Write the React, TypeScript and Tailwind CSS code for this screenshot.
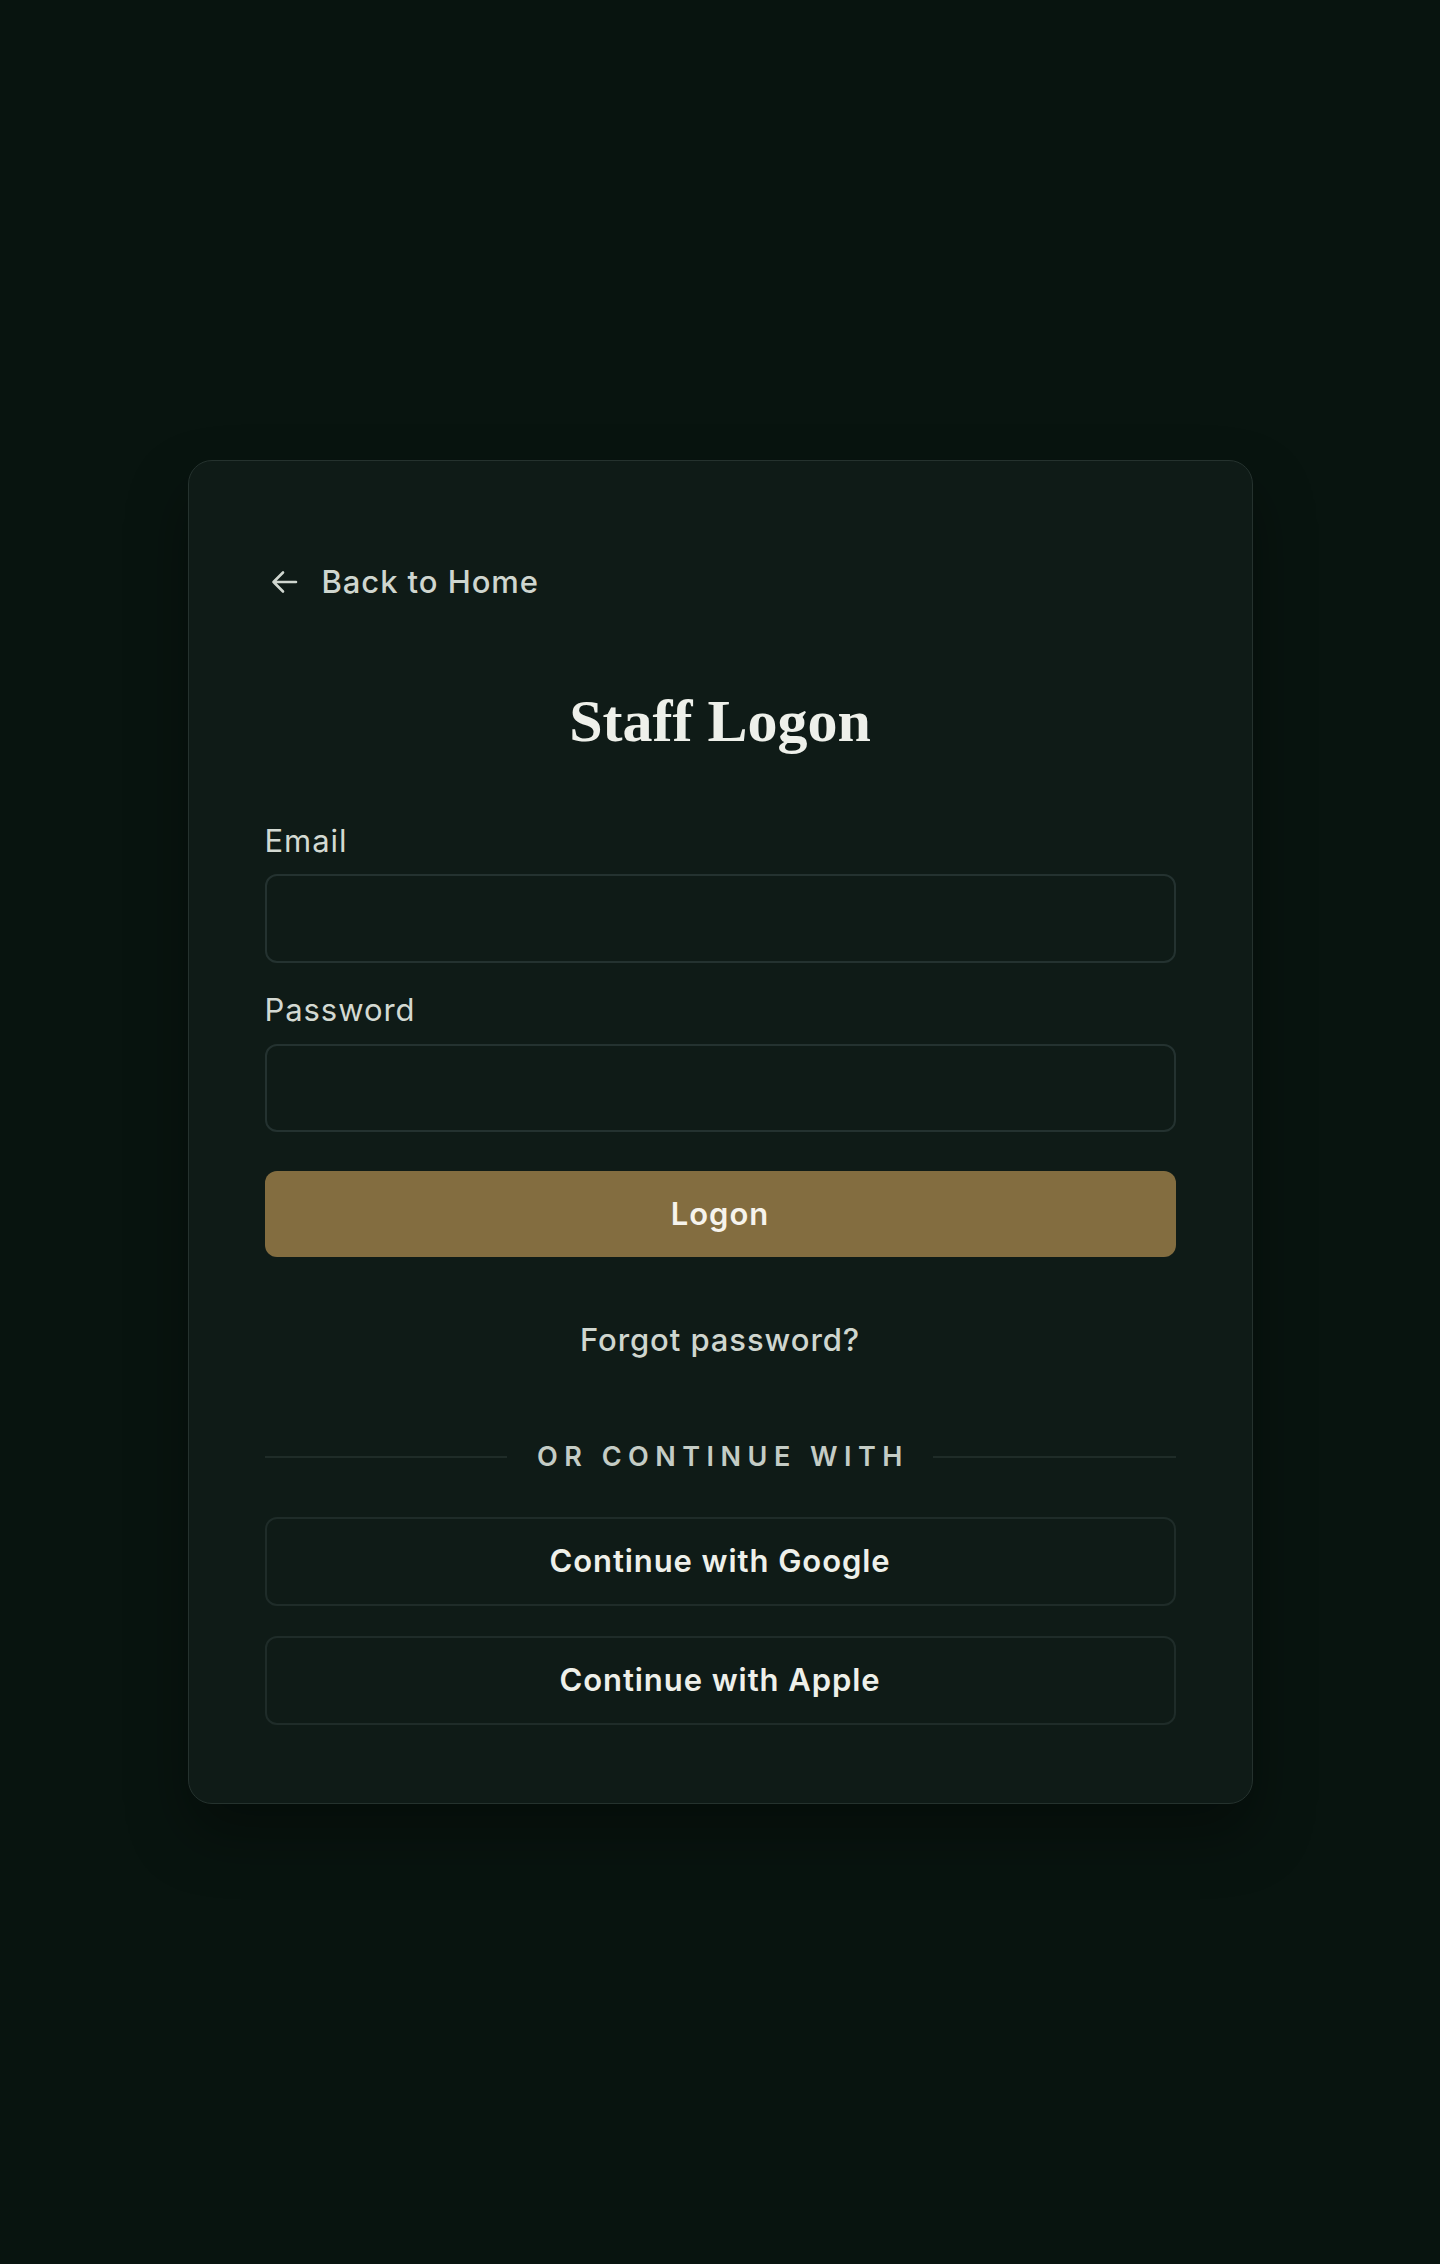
import React from "react";

const sans = { fontFamily: '"Inter", "Liberation Sans", sans-serif' };

export default function App() {
  return (
    <div
      className="min-h-[2264px] w-full bg-[#08140f] flex items-center justify-center"
      style={sans}
    >
      <div className="w-[1065px] rounded-[24px] border border-[#25322e] bg-[#0f1b17] px-[76px] pt-[98px] pb-[78px] shadow-[0_30px_60px_rgba(0,0,0,0.35)]">
        <a className="flex items-center gap-[24px] h-[45px] text-[31px] leading-[45px] tracking-[0.03em] font-medium text-[#cfd6cf]">
          <svg width="27" height="24" viewBox="0 0 27 24" fill="none" className="ml-[6px]">
            <path
              d="M25 12H2.5M12 2.5L2.5 12L12 21.5"
              stroke="#cfd6cf"
              strokeWidth="2.6"
              strokeLinecap="round"
              strokeLinejoin="round"
            />
          </svg>
          <span>Back to Home</span>
        </a>

        <h1
          className="mt-[81px] text-center text-[60px] leading-[72px] font-bold text-[#eef0ea]"
          style={{ fontFamily: '"Liberation Serif", "DejaVu Serif", serif' }}
        >
          Staff Logon
        </h1>

        <div className="mt-[61px] flex flex-col">
          <label className="text-[31px] leading-[45px] tracking-[0.03em] text-[#d3d9d2]">Email</label>
          <input
            type="email"
            className="mt-[11px] h-[89px] w-full rounded-[12px] border-2 border-[#243230] bg-[#0f1b17] px-5 text-[30px] text-[#eef0ea] outline-none"
          />
          <label className="mt-[24px] text-[31px] leading-[45px] tracking-[0.03em] text-[#d3d9d2]">Password</label>
          <input
            type="password"
            className="mt-[12px] h-[88px] w-full rounded-[12px] border-2 border-[#243230] bg-[#0f1b17] px-5 text-[30px] text-[#eef0ea] outline-none"
          />
          <button className="mt-[39px] h-[86px] w-full rounded-[12px] bg-[#836d40] text-[31px] tracking-[0.03em] font-semibold text-[#f6f3ec]">
            Logon
          </button>
          <div className="mt-[60px] text-center text-[31px] leading-[45px] tracking-[0.03em] font-medium text-[#cfd6cf]">
            Forgot password?
          </div>

          <div className="mt-[75px] flex items-center h-[40px]">
            <div className="h-[2px] flex-1 bg-[#1f2c28]" />
            <span className="ml-[30px] mr-[24px] text-[27px] leading-[40px] font-semibold tracking-[0.24em] text-[#c4ccc5]">
              OR CONTINUE WITH
            </span>
            <div className="h-[2px] flex-1 bg-[#1f2c28]" />
          </div>

          <button className="mt-[40px] h-[89px] w-full rounded-[12px] border-2 border-[#1f2c29] bg-[#0f1b17] text-[31px] tracking-[0.03em] font-semibold text-[#eef0ea]">
            Continue with Google
          </button>
          <button className="mt-[30px] h-[89px] w-full rounded-[12px] border-2 border-[#1f2c29] bg-[#0f1b17] text-[31px] tracking-[0.03em] font-semibold text-[#eef0ea]">
            Continue with Apple
          </button>
        </div>
      </div>
    </div>
  );
}
